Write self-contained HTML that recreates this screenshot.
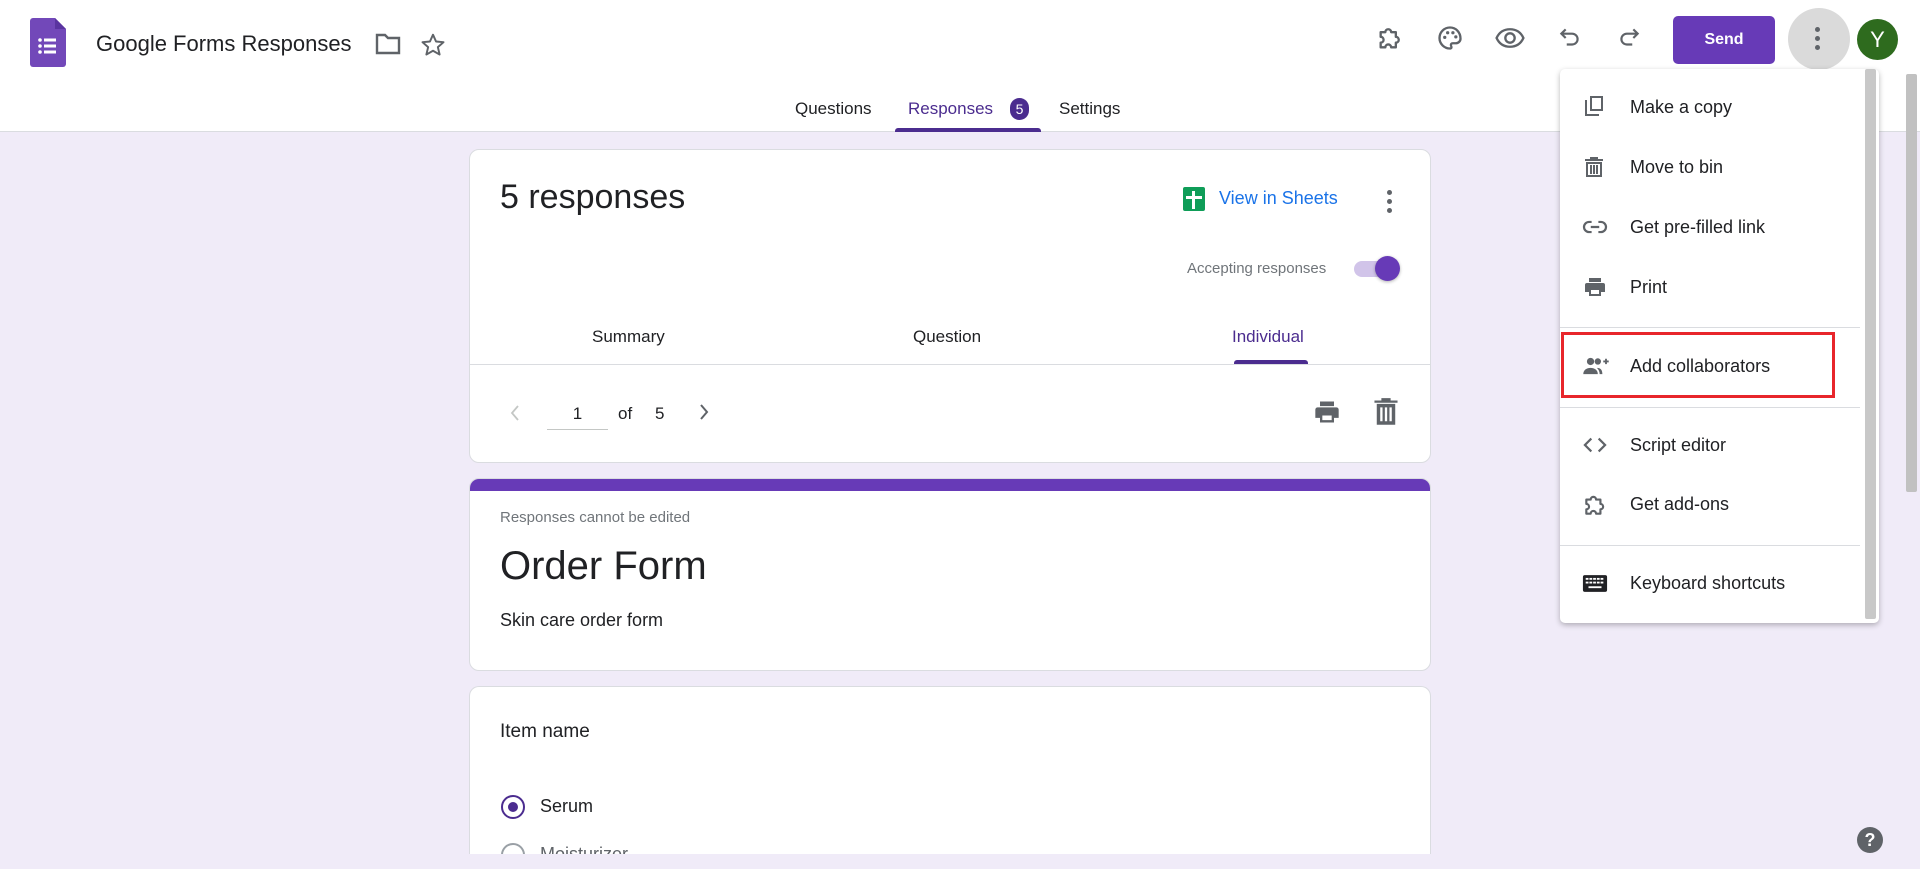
<!DOCTYPE html>
<html><head><meta charset="utf-8"><style>
*{box-sizing:border-box;margin:0;padding:0}
html{width:1920px;height:869px;overflow:hidden}
body{width:1920px;height:869px;overflow:hidden;background:#f0ebf8;font-family:"Liberation Sans",Arial,sans-serif;color:#202124;position:relative}
.abs{position:absolute}
.hdr{left:0;top:0;width:1920px;height:132px;background:#fff;border-bottom:1px solid #dadce0}
.card{background:#fff;border:1px solid #dadce0;border-radius:10px;position:absolute;left:469px;width:962px;overflow:hidden}
.ic{position:absolute}
.mi{position:absolute;left:1630px;font-size:18px;color:#202124}
.mic{position:absolute;left:1582px}
</style></head><body>
<div class="abs hdr"></div>
<svg class="ic" style="left:30px;top:18px" width="36" height="49" viewBox="0 0 36 49"><path d="M3 0h22l11 11v35a3 3 0 0 1-3 3H3a3 3 0 0 1-3-3V3a3 3 0 0 1 3-3z" fill="#7248b9"/><path d="M25 0l11 11H25z" fill="#5a34a0"/><g fill="#fff"><circle cx="10" cy="22" r="1.8"/><circle cx="10" cy="28" r="1.8"/><circle cx="10" cy="34" r="1.8"/><rect x="14" y="20.5" width="12" height="3"/><rect x="14" y="26.5" width="12" height="3"/><rect x="14" y="32.5" width="12" height="3"/></g></svg>
<div class="abs" style="left:96px;top:31px;font-size:22px;color:#202124">Google Forms Responses</div>
<svg class="ic" style="left:375px;top:33px" width="26" height="22" viewBox="0 0 26 22"><path d="M2 2h8l3 3h11v15H2z" fill="none" stroke="#5f6368" stroke-width="2.4"/></svg>
<svg class="ic" style="left:420px;top:32px" width="26" height="26" viewBox="0 0 24 24"><path d="M12 2.5l2.8 6.3 6.9.6-5.2 4.6 1.6 6.8L12 17.3l-6.1 3.5 1.6-6.8-5.2-4.6 6.9-.6z" fill="none" stroke="#5f6368" stroke-width="1.8" stroke-linejoin="round"/></svg>
<svg class="ic" style="left:1376px;top:24px" width="28" height="28" viewBox="0 0 24 24"><path d="M4 7h4a2.5 2.5 0 0 1 5 0h4v4a2.5 2.5 0 0 1 0 5v4h-4a2.5 2.5 0 0 0-5 0H4v-4a2.5 2.5 0 0 0 0-5z" fill="none" stroke="#5f6368" stroke-width="2" stroke-linejoin="round"/></svg>
<svg class="ic" style="left:1436px;top:24px" width="28" height="28" viewBox="0 0 24 24"><path d="M12 3a9 9 0 0 0 0 18c1.2 0 1.6-1 1-2-.7-1.1 0-2.5 1.4-2.5H17a4 4 0 0 0 4-4C21 7 17 3 12 3z" fill="none" stroke="#5f6368" stroke-width="2"/><g fill="#5f6368"><circle cx="7.5" cy="11.5" r="1.4"/><circle cx="10" cy="7.5" r="1.4"/><circle cx="14.5" cy="7.5" r="1.4"/><circle cx="17" cy="11" r="1.4"/></g></svg>
<svg class="ic" style="left:1494px;top:24px" width="32" height="28" viewBox="0 0 26 24"><path d="M1.5 12C4 6.5 8 4.5 13 4.5S22 6.5 24.5 12C22 17.5 18 19.5 13 19.5S4 17.5 1.5 12z" fill="none" stroke="#5f6368" stroke-width="2"/><circle cx="13" cy="12" r="4" fill="none" stroke="#5f6368" stroke-width="2"/></svg>
<svg class="ic" style="left:1557px;top:25px" width="26" height="26" viewBox="0 0 24 24"><path d="M8 4L4 8l4 4M4 8h10a5 5 0 0 1 0 10H9" fill="none" stroke="#5f6368" stroke-width="2"/></svg>
<svg class="ic" style="left:1616px;top:25px" width="26" height="26" viewBox="0 0 24 24"><path d="M16 4l4 4-4 4M20 8H10a5 5 0 0 0 0 10h5" fill="none" stroke="#5f6368" stroke-width="2"/></svg>
<div class="abs" style="left:1673px;top:16px;width:102px;height:48px;background:#673ab7;border-radius:5px;color:#fff;font-size:16px;font-weight:bold;text-align:center;line-height:48px">Send</div>
<div class="abs" style="left:1788px;top:8px;width:62px;height:62px;border-radius:50%;background:#dadada"></div>
<div class="abs" style="left:1815px;top:27px"><div style="width:5px;height:5px;border-radius:50%;background:#5f6368;margin-bottom:4px"></div><div style="width:5px;height:5px;border-radius:50%;background:#5f6368;margin-bottom:4px"></div><div style="width:5px;height:5px;border-radius:50%;background:#5f6368"></div></div>
<div class="abs" style="left:1857px;top:19px;width:41px;height:41px;border-radius:50%;background:#2e6b1e;color:#fff;font-size:22px;text-align:center;line-height:41px">Y</div>
<div class="abs" style="left:795px;top:99px;font-size:17px;color:#202124">Questions</div>
<div class="abs" style="left:908px;top:99px;font-size:17px;color:#4b2c8f">Responses</div>
<div class="abs" style="left:1010px;top:98px;width:19px;height:22px;border-radius:10px;background:#4b2c8f;color:#fff;font-size:14px;text-align:center;line-height:22px">5</div>
<div class="abs" style="left:1059px;top:99px;font-size:17px;color:#202124">Settings</div>
<div class="abs" style="left:895px;top:128px;width:146px;height:4px;background:#4b2c8f;border-radius:3px 3px 0 0"></div>
<div class="card" style="top:149px;height:314px">
 <div class="abs" style="left:30px;top:28px;font-size:34px;color:#202124">5 responses</div>
 <svg class="ic" style="left:713px;top:37px" width="22" height="24" viewBox="0 0 22 24"><rect width="22" height="24" rx="2" fill="#0f9d58"/><rect x="9" y="4" width="3" height="18" fill="#fff"/><rect x="3" y="9" width="16" height="3" fill="#fff"/></svg>
 <div class="abs" style="left:749px;top:38px;font-size:18px;color:#1a73e8">View in Sheets</div>
 <div class="abs" style="left:917px;top:40px"><div style="width:5px;height:5px;border-radius:50%;background:#5f6368;margin-bottom:4px"></div><div style="width:5px;height:5px;border-radius:50%;background:#5f6368;margin-bottom:4px"></div><div style="width:5px;height:5px;border-radius:50%;background:#5f6368"></div></div>
 <div class="abs" style="left:717px;top:110px;font-size:15px;color:#70757a">Accepting responses</div>
 <div class="abs" style="left:884px;top:111px;width:40px;height:16px;border-radius:8px;background:#d1c4e9"></div>
 <div class="abs" style="left:905px;top:106px;width:25px;height:25px;border-radius:50%;background:#673ab7;box-shadow:0 1px 3px rgba(0,0,0,.3)"></div>
 <div class="abs" style="left:122px;top:177px;font-size:17px;color:#202124">Summary</div>
 <div class="abs" style="left:443px;top:177px;font-size:17px;color:#202124">Question</div>
 <div class="abs" style="left:762px;top:177px;font-size:17px;color:#4b2c8f">Individual</div>
 <div class="abs" style="left:764px;top:210px;width:74px;height:4px;background:#4b2c8f;border-radius:3px 3px 0 0"></div>
 <div class="abs" style="left:0;top:214px;width:962px;height:1px;background:#dadce0"></div>
 <svg class="ic" style="left:39px;top:254px" width="12" height="18" viewBox="0 0 12 18"><path d="M9 2L3 9l6 7" fill="none" stroke="#c4c7c5" stroke-width="1.8"/></svg>
 <div class="abs" style="left:77px;top:254px;width:61px;height:26px;border-bottom:1px solid #c4c7c5;text-align:center;font-size:17px;color:#202124">1</div>
 <div class="abs" style="left:148px;top:254px;font-size:17px;color:#202124">of</div>
 <div class="abs" style="left:185px;top:254px;font-size:17px;color:#202124">5</div>
 <svg class="ic" style="left:228px;top:253px" width="12" height="18" viewBox="0 0 12 18"><path d="M3 2l6 7-6 7" fill="none" stroke="#5f6368" stroke-width="2"/></svg>
 <svg class="ic" style="left:843px;top:248px" width="28" height="28" viewBox="0 0 24 24"><path d="M6 3h12v4H6zM4 8h16a2 2 0 0 1 2 2v7h-4v4H6v-4H2v-7a2 2 0 0 1 2-2zm4 7v4h8v-4z" fill="#5f6368"/></svg>
 <svg class="ic" style="left:903px;top:247px" width="26" height="30" viewBox="0 0 22 26"><path d="M7 1h8v2h6v2H1V3h6zM3 6h16v18H3zm3 3v12h2V9zm4 0v12h2V9zm4 0v12h2V9z" fill="#5f6368"/></svg>
</div>
<div class="card" style="top:478px;height:193px">
 <div class="abs" style="left:0;top:0;width:962px;height:12px;background:#673ab7"></div>
 <div class="abs" style="left:30px;top:30px;font-size:15px;color:#70757a">Responses cannot be edited</div>
 <div class="abs" style="left:30px;top:65px;font-size:40px;color:#202124">Order Form</div>
 <div class="abs" style="left:30px;top:131px;font-size:18px;color:#202124">Skin care order form</div>
</div>
<div class="card" style="top:686px;height:168px;border-bottom:none;border-radius:10px 10px 0 0">
 <div class="abs" style="left:30px;top:34px;font-size:19px;color:#202124">Item name</div>
 <div class="abs" style="left:31px;top:108px;width:24px;height:24px;border-radius:50%;border:2.5px solid #4b2c8f"></div>
 <div class="abs" style="left:38px;top:115px;width:10px;height:10px;border-radius:50%;background:#4b2c8f"></div>
 <div class="abs" style="left:70px;top:109px;font-size:18px;color:#202124">Serum</div>
 <div class="abs" style="left:31px;top:156px;width:24px;height:24px;border-radius:50%;border:2px solid #9aa0a6"></div>
 <div class="abs" style="left:70px;top:157px;font-size:18px;color:#5f6368">Moisturizer</div>
</div>
<div class="abs" style="left:1906px;top:74px;width:11px;height:418px;background:#c1c1c1;border-radius:2px"></div>
<div class="abs" style="left:1857px;top:827px;width:26px;height:26px;border-radius:50%;background:#5f6368;color:#fff;font-size:18px;font-weight:bold;text-align:center;line-height:26px">?</div>
<div class="abs" style="left:1560px;top:69px;width:319px;height:554px;background:#fff;border-radius:5px;box-shadow:0 2px 6px rgba(0,0,0,.28)"></div>
<div class="abs" style="left:1865px;top:69px;width:11px;height:550px;background:#c8c8c8;border-radius:2px"></div>
<svg class="mic" style="top:94px" width="24" height="24" viewBox="0 0 24 24"><path d="M8 2h13v15H8zM10 4v11h9V4z" fill="#5f6368"/><path d="M3 6h2v14h12v2H3z" fill="#5f6368"/></svg>
<div class="mi" style="top:97px">Make a copy</div>
<svg class="mic" style="top:155px" width="24" height="24" viewBox="0 0 24 24"><path d="M8 2h8v2h5v2H3V4h5zM4 7h16v15H4zm2 2v11h12V9zm2 1h2v9H8zm3 0h2v9h-2zm3 0h2v9h-2z" fill="#5f6368"/></svg>
<div class="mi" style="top:157px">Move to bin</div>
<svg class="mic" style="top:216px" width="26" height="22" viewBox="0 0 28 26"><path d="M10 7H7a6 6 0 0 0 0 12h3M18 7h3a6 6 0 0 1 0 12h-3M9 13h10" fill="none" stroke="#5f6368" stroke-width="2.6"/></svg>
<div class="mi" style="top:217px">Get pre-filled link</div>
<svg class="mic" style="top:275px" width="26" height="24" viewBox="0 0 24 24"><path d="M6 3h12v4H6zM4 8h16a2 2 0 0 1 2 2v7h-4v4H6v-4H2v-7a2 2 0 0 1 2-2zm4 7v4h8v-4z" fill="#5f6368"/></svg>
<div class="mi" style="top:277px">Print</div>
<div class="abs" style="left:1560px;top:327px;width:300px;height:1px;background:#dadce0"></div>
<div class="abs" style="left:1561px;top:332px;width:274px;height:66px;border:3px solid #e8262b"></div>
<svg class="mic" style="top:356px" width="28" height="20" viewBox="0 0 30 22"><circle cx="9" cy="6" r="4" fill="#5f6368"/><path d="M1 20c0-5 4-7 8-7s8 2 8 7z" fill="#5f6368"/><circle cx="17" cy="6" r="3.5" fill="#5f6368"/><path d="M16 13c4 0 6 2 6 7h-3c0-3-1-5-3-7z" fill="#5f6368"/><path d="M23 6h6M26 3v6" stroke="#5f6368" stroke-width="2"/></svg>
<div class="mi" style="top:356px">Add collaborators</div>
<div class="abs" style="left:1560px;top:407px;width:300px;height:1px;background:#dadce0"></div>
<svg class="mic" style="top:434px" width="26" height="22" viewBox="0 0 28 24"><path d="M10 5l-7 7 7 7M18 5l7 7-7 7" fill="none" stroke="#5f6368" stroke-width="2.4"/></svg>
<div class="mi" style="top:435px">Script editor</div>
<svg class="mic" style="top:492px" width="26" height="26" viewBox="0 0 24 24"><path d="M4 7h4a2.5 2.5 0 0 1 5 0h4v4a2.5 2.5 0 0 1 0 5v4h-4a2.5 2.5 0 0 0-5 0H4v-4a2.5 2.5 0 0 0 0-5z" fill="none" stroke="#5f6368" stroke-width="2" stroke-linejoin="round"/></svg>
<div class="mi" style="top:494px">Get add-ons</div>
<div class="abs" style="left:1560px;top:545px;width:300px;height:1px;background:#dadce0"></div>
<svg class="mic" style="top:574px" width="26" height="19" viewBox="0 0 28 20"><rect x="1" y="1" width="26" height="18" rx="2" fill="#202124"/><g fill="#fff"><rect x="4" y="4" width="3" height="2"/><rect x="8" y="4" width="3" height="2"/><rect x="12" y="4" width="3" height="2"/><rect x="16" y="4" width="3" height="2"/><rect x="20" y="4" width="3" height="2"/><rect x="4" y="8" width="3" height="2"/><rect x="8" y="8" width="3" height="2"/><rect x="12" y="8" width="3" height="2"/><rect x="16" y="8" width="3" height="2"/><rect x="20" y="8" width="3" height="2"/><rect x="7" y="13" width="14" height="2"/></g></svg>
<div class="mi" style="top:573px">Keyboard shortcuts</div>
</body></html>
